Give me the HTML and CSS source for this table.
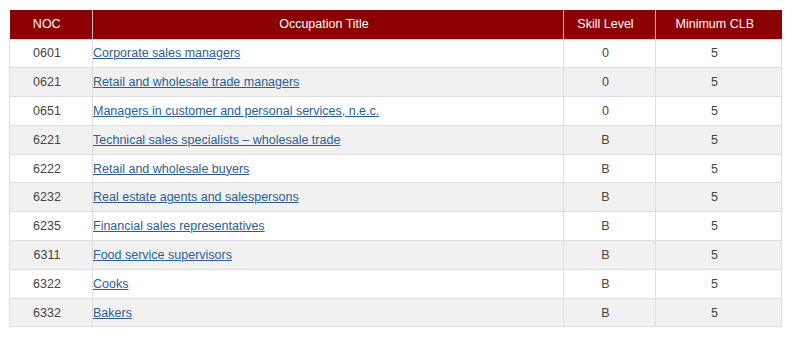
FILE: index.html
```html
<!DOCTYPE html>
<html>
<head>
<meta charset="utf-8">
<link rel="stylesheet" href="styles.css">
</head>
<body>
<table class="noc-table">
  <colgroup>
    <col class="c-noc"><col class="c-title"><col class="c-skill"><col class="c-clb">
  </colgroup>
  <thead>
    <tr><th>NOC</th><th>Occupation Title</th><th>Skill Level</th><th>Minimum CLB</th></tr>
  </thead>
  <tbody>
    <tr><td>0601</td><td class="title"><a href="#">Corporate sales managers</a></td><td>0</td><td>5</td></tr>
    <tr><td>0621</td><td class="title"><a href="#">Retail and wholesale trade managers</a></td><td>0</td><td>5</td></tr>
    <tr><td>0651</td><td class="title"><a href="#">Managers in customer and personal services, n.e.c.</a></td><td>0</td><td>5</td></tr>
    <tr><td>6221</td><td class="title"><a href="#">Technical sales specialists – wholesale trade</a></td><td>B</td><td>5</td></tr>
    <tr><td>6222</td><td class="title"><a href="#">Retail and wholesale buyers</a></td><td>B</td><td>5</td></tr>
    <tr><td>6232</td><td class="title"><a href="#">Real estate agents and salespersons</a></td><td>B</td><td>5</td></tr>
    <tr><td>6235</td><td class="title"><a href="#">Financial sales representatives</a></td><td>B</td><td>5</td></tr>
    <tr><td>6311</td><td class="title"><a href="#">Food service supervisors</a></td><td>B</td><td>5</td></tr>
    <tr><td>6322</td><td class="title"><a href="#">Cooks</a></td><td>B</td><td>5</td></tr>
    <tr><td>6332</td><td class="title"><a href="#">Bakers</a></td><td>B</td><td>5</td></tr>
  </tbody>
</table>
</body>
</html>
```
FILE: styles.css
```css
html, body {
  margin: 0;
  padding: 0;
  background: #fff;
}
body {
  padding: 10px 0 0 9px;
  font-family: "Liberation Sans", Arial, sans-serif;
  font-size: 12.5px;
  color: #444;
}
.noc-table {
  border-collapse: collapse;
  width: 772px;
  table-layout: fixed;
}
.c-noc { width: 83px; }
.c-title { width: 471px; }
.c-skill { width: 92px; }
.c-clb { width: 126px; }
.noc-table th {
  background: #8b0000;
  color: #fff;
  font-weight: normal;
  height: 29px;
  padding: 0 8px 0 0;
  text-align: center;
  border-left: 1px solid #d9c0c0;
  box-sizing: border-box;
}
.noc-table th:first-child { border-left: none; }
.noc-table td {
  height: 28.8px;
  padding: 0 8px 0 0;
  text-align: center;
  border: 1px solid #dedede;
  box-sizing: border-box;
}
.noc-table td.title {
  text-align: left;
  padding-left: 0;
}
.noc-table tbody tr:nth-child(even) td {
  background: #f1f1f1;
}
.noc-table a {
  color: #2d5e91;
  text-decoration: underline;
}
```
